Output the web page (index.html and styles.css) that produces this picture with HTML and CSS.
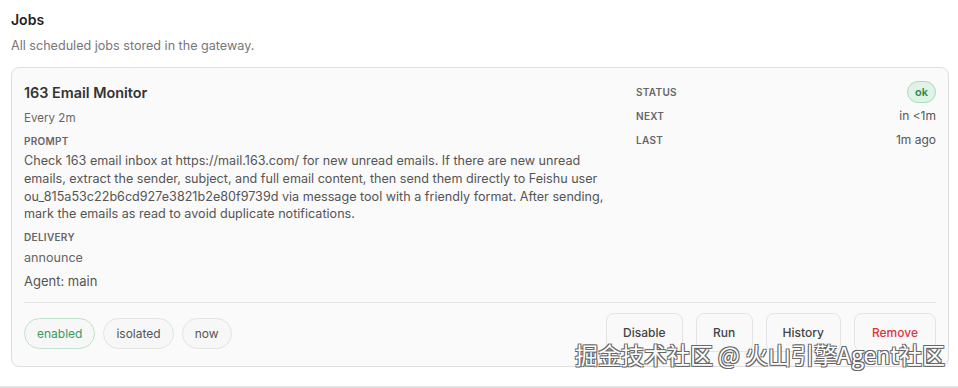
FILE: index.html
```html
<!DOCTYPE html>
<html>
<head>
<meta charset="utf-8">
<link rel="stylesheet" href="styles.css">
</head>
<body>
<section class="section">
  <h2 class="title">Jobs</h2>
  <p class="sub">All scheduled jobs stored in the gateway.</p>
  <div class="card">
    <div class="grid">
      <div class="main">
        <div class="job-name">163 Email Monitor</div>
        <div class="muted every">Every 2m</div>
        <div class="label">PROMPT</div>
        <div class="prompt">Check 163 email inbox at https://mail.163.com/ for new unread emails. If there are new unread<br>emails, extract the sender, subject, and full email content, then send them directly to Feishu user<br>ou_815a53c22b6cd927e3821b2e80f9739d via message tool with a friendly format. After sending,<br>mark the emails as read to avoid duplicate notifications.</div>
        <div class="label delivery">DELIVERY</div>
        <div class="muted announce">announce</div>
        <div class="agent">Agent: main</div>
      </div>
      <div class="side">
        <div class="kv"><span class="label">STATUS</span><span class="pill ok">ok</span></div>
        <div class="kv"><span class="label">NEXT</span><span class="val">in &lt;1m</span></div>
        <div class="kv"><span class="label">LAST</span><span class="val">1m ago</span></div>
      </div>
    </div>
    <div class="footer">
      <div class="chips">
        <span class="chip green">enabled</span>
        <span class="chip">isolated</span>
        <span class="chip">now</span>
      </div>
      <div class="actions">
        <button class="btn">Disable</button>
        <button class="btn">Run</button>
        <button class="btn">History</button>
        <button class="btn danger">Remove</button>
      </div>
    </div>
  </div>
  <div class="next-line"></div>
  <div class="watermark">掘金技术社区 @ 火山引擎Agent社区</div>
</section>
</body>
</html>
```
FILE: styles.css
```css
* { box-sizing: border-box; }
html, body { margin: 0; padding: 0; background: #fff; }
body {
  font-family: Inter, "Noto Sans", sans-serif;
  color: #333;
  overflow: hidden;
}
.section { padding: 11px 9px 0 11px; position: relative; height: 388px; }
.title { margin: 0; font-size: 14px; font-weight: 600; color: #1f1f1f; line-height: 18px; }
.sub { margin: 9px 0 0; font-size: 12.6px; color: #777; line-height: 16px; }
.card {
  margin-top: 13px;
  border: 1px solid #dedede;
  border-radius: 8px;
  background: #fafafa;
  padding: 14px 12px 14px 12px;
}
.grid { display: grid; grid-template-columns: 1fr 300px; column-gap: 25px; }
.main { display: flex; flex-direction: column; }
.job-name { font-size: 14.4px; font-weight: 600; color: #333; line-height: 22px; }
.muted { font-size: 12px; color: #666; line-height: 16px; }
.every { margin-top: 6px; font-size: 11.6px; }
.announce { margin-top: 6px; font-size: 12.6px; }
.label { font-size: 10px; font-weight: 600; color: #666; letter-spacing: 0.3px; line-height: 14px; margin-top: 8px; }
.delivery { margin-top: 7px; }
.prompt { font-size: 12.6px; color: #555; line-height: 17.8px; margin-top: 4px; white-space: nowrap; }
.agent { font-size: 13px; color: #555; line-height: 18px; margin-top: 6px; }
.side { display: flex; flex-direction: column; margin-top: -2px; }
.kv { display: flex; justify-content: space-between; align-items: center; height: 23px; margin-bottom: 1px; }
.kv .label { margin-top: 0; }
.val { font-size: 12px; color: #555; }
.pill { font-size: 11px; font-weight: 600; padding: 0 7px; height: 22px; line-height: 20px; border-radius: 11px; }
.ok { background: #dff3e6; border: 1px solid #a9dcb9; color: #2e8a4f; }
.footer {
  margin-top: 12px;
  border-top: 1px solid #e4e4e4;
  padding-top: 10px;
  display: flex;
  justify-content: space-between;
  align-items: flex-start;
}
.chips { display: flex; gap: 8px; margin-top: 5px; }
.chip {
  font-size: 12px; color: #555;
  border: 1px solid #e3e3e3; border-radius: 16px;
  height: 31px; line-height: 29px; padding: 0 12px;
  background: #f7f7f7;
}
.chip.green { color: #3a9a5b; border-color: #bfe3cc; }
.actions { display: flex; gap: 13px; }
.btn {
  font-family: inherit; font-size: 12px; font-weight: 500; color: #444;
  background: #f9f9f9; border: 1px solid #e4e4e4; border-radius: 8px;
  height: 39px; padding: 0 16px; min-width: 57px;
}
.btn.danger { color: #d9363e; padding: 0 17px; }
.next-line { position: absolute; left: 0; right: 0; top: 386px; border-top: 2px solid #e2e2e2; }
.watermark {
  position: absolute; right: 13px; top: 339px;
  font-family: "Noto Sans CJK SC", sans-serif;
  font-size: 23px; color: #fff; line-height: 30px;
  text-shadow: -1px -1px 0 #666, 1px -1px 0 #666, -1px 1px 0 #666, 1px 1px 0 #666;
  white-space: nowrap;
}
```
